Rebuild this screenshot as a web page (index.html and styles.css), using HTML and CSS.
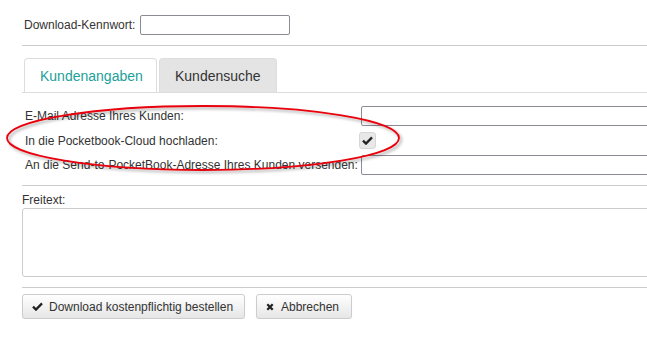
FILE: index.html
```html
<!DOCTYPE html>
<html>
<head>
	<title>Download bestellen</title>
<link rel="stylesheet" href="styles.css">
</head>
<body>
	<div class="page">
		<div class="pw-row">
			<label for="pw">Download-Kennwort:</label>
			<input type="text" id="pw" class="pw-input">
		</div>
		<div class="divider pw-divider"></div>

		<div class="tabs">
			<div class="tab active">Kundenangaben</div>
			<div class="tab">Kundensuche</div>
		</div>

		<div class="fields">
			<div class="field">
				<label>E-Mail Adresse Ihres Kunden:</label>
				<input type="text" class="text-input">
			</div>
			<div class="field field-check">
				<label>In die Pocketbook-Cloud hochladen:</label>
				<span class="checkbox">
					<svg width="11" height="9" viewBox="0 0 11 9"><path d="M1 4.6 L4 7.6 L10 1.4" fill="none" stroke="#222" stroke-width="2.3"/></svg>
				</span>
			</div>
			<div class="field">
				<label>An die Send-to-PocketBook-Adresse Ihres Kunden versenden:</label>
				<input type="text" class="text-input">
			</div>

			<svg class="marker" width="420" height="80" viewBox="0 0 420 80">
				<defs>
					<filter id="shadow" x="-10%" y="-30%" width="120%" height="160%">
						<feDropShadow dx="2" dy="2" stdDeviation="1.6" flood-color="#000" flood-opacity="0.35"/>
					</filter>
				</defs>
				<ellipse cx="203" cy="36" rx="196" ry="32" fill="none" stroke="#e8000b" stroke-width="1.8" filter="url(#shadow)"/>
			</svg>
		</div>
		<div class="divider"></div>

		<div class="freitext">
			<label>Freitext:</label>
			<textarea class="textarea"></textarea>
		</div>
		<div class="divider"></div>

		<div class="buttons">
			<button class="btn btn-order">
				<svg width="11" height="9" viewBox="0 0 11 9"><path d="M1 4.6 L4 7.6 L10 1.4" fill="none" stroke="#222" stroke-width="2.3"/></svg>
				<span>Download kostenpflichtig bestellen</span>
			</button>
			<button class="btn btn-cancel">
				<svg width="8" height="8" viewBox="0 0 8 8"><path d="M1.3 1.3 L6.7 6.7 M6.7 1.3 L1.3 6.7" fill="none" stroke="#222" stroke-width="2.3"/></svg>
				<span>Abbrechen</span>
			</button>
		</div>
	</div>
</body>
</html>
```

FILE: styles.css
```css
body {
	margin: 0;
	font-family: "Liberation Sans", Arial, sans-serif;
	font-size: 12px;
	color: #333333;
	background: #ffffff;
	overflow: hidden;
}

.page {
	width: 760px;
	padding: 15px 0 0 22px;
}

.pw-row {
	display: flex;
	align-items: center;
	gap: 5px;
	padding-left: 2px;
}

.pw-input {
	width: 150px;
	height: 20px;
	box-sizing: border-box;
	border: 1px solid #8d8a96;
	border-radius: 2px;
	padding: 0 4px;
	margin: 0;
}

.divider {
	height: 1px;
	background: #cccccc;
}

.pw-divider {
	margin-top: 10px;
}

.tabs {
	display: flex;
	gap: 2px;
	margin-top: 12px;
	padding-left: 2px;
	border-bottom: 1px solid #dddddd;
}

.tab {
	height: 34px;
	box-sizing: border-box;
	padding: 0 15px;
	display: flex;
	align-items: center;
	font-size: 14px;
	border: 1px solid #dddddd;
	border-bottom: none;
	border-radius: 4px 4px 0 0;
	background: #e4e4e4;
	color: #333333;
}

.tab.active {
	background: #ffffff;
	color: #21a09a;
	width: 133px;
}

.fields {
	position: relative;
	padding: 13px 0 10px 3px;
}

.field {
	display: flex;
	align-items: center;
	height: 20px;
	margin-bottom: 4px;
}

.field:last-of-type {
	margin-bottom: 0;
}

.field-check {
	height: 21px;
}

.field label {
	width: 336px;
	flex-shrink: 0;
	white-space: nowrap;
}

.text-input {
	width: 400px;
	height: 20px;
	box-sizing: border-box;
	border: 1px solid #8d8a96;
	border-radius: 2px;
	margin: 0;
}

.checkbox {
	width: 17px;
	height: 17px;
	box-sizing: border-box;
	margin-left: -2px;
	border: 1px solid #d6d6d6;
	border-radius: 3px;
	background: #e8e8e8;
	display: flex;
	align-items: center;
	justify-content: center;
}

.marker {
	position: absolute;
	left: -22px;
	top: 9px;
	pointer-events: none;
}

.freitext {
	padding-top: 7px;
}

.freitext label {
	display: block;
	line-height: 15px;
}

.textarea {
	display: block;
	width: 700px;
	height: 69px;
	box-sizing: border-box;
	margin: 0 0 10px 0;
	border: 1px solid #cccccc;
	border-radius: 3px;
	resize: none;
}

.buttons {
	display: flex;
	gap: 11px;
	margin-top: 6px;
}

.btn {
	height: 25px;
	box-sizing: border-box;
	display: flex;
	align-items: center;
	gap: 6px;
	padding: 0 9px;
	font-family: "Liberation Sans", Arial, sans-serif;
	font-size: 12px;
	color: #333333;
	white-space: nowrap;
	border: 1px solid #cccccc;
	border-radius: 3px;
	background: linear-gradient(#ffffff, #e6e6e6);
	box-shadow: 0 1px 1px rgba(0, 0, 0, 0.08);
}

.btn svg {
	flex-shrink: 0;
}

.btn-order {
	width: 223px;
}

.btn-cancel {
	width: 96px;
	gap: 7px;
}
```
